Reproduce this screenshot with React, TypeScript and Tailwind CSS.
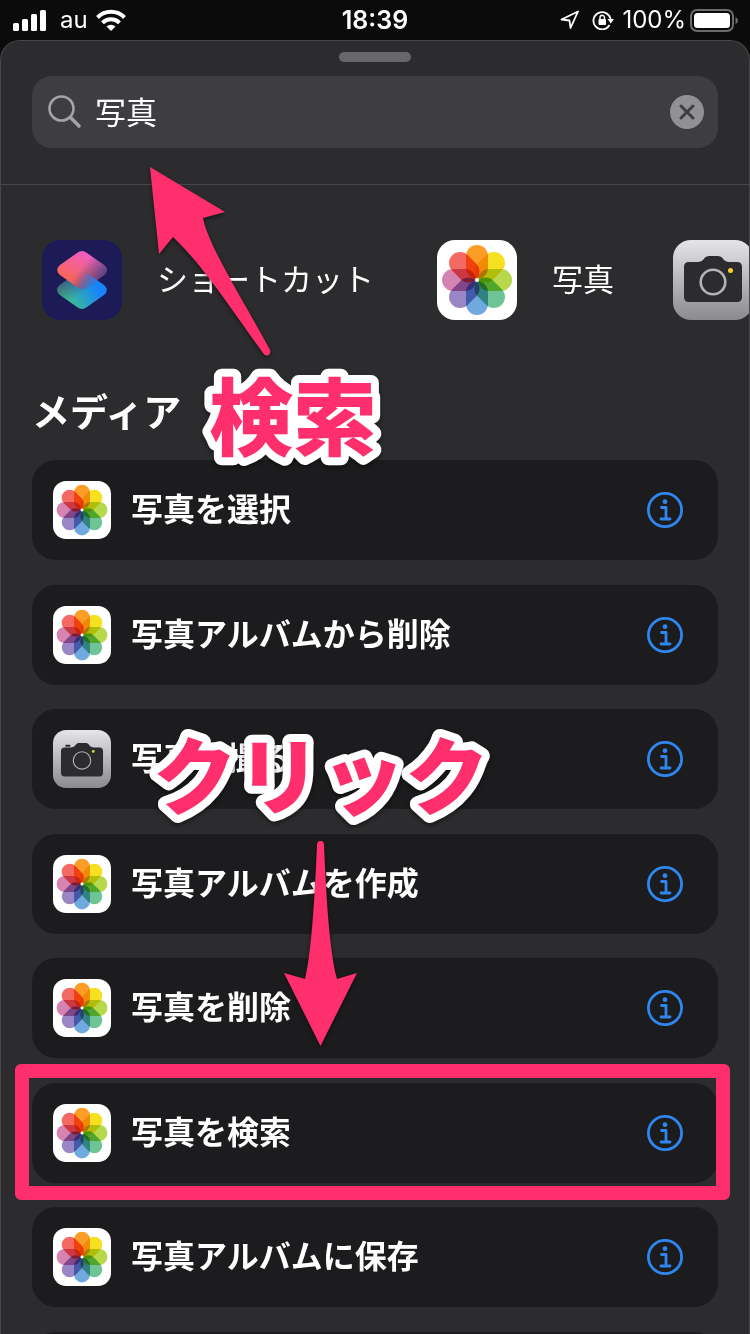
import { useId, useState } from "react";

const petals = [
  { angle: 0, color: "#fb9d27" },
  { angle: 45, color: "#f5e11f" },
  { angle: 90, color: "#b7d84b" },
  { angle: 135, color: "#6fc495" },
  { angle: 180, color: "#6fa9dd" },
  { angle: 225, color: "#9a86c4" },
  { angle: 270, color: "#d584b1" },
  { angle: 315, color: "#f46a62" },
];

function PhotosIcon({ className }: { className: string }) {
  return (
    <svg viewBox="0 0 80 80" className={className} aria-hidden="true">
      <rect width="80" height="80" rx="18" fill="#fff" />
      <g className="isolate">
        {petals.map((p) => (
          <rect
            key={p.angle}
            x="29"
            y="5"
            width="22"
            height="34"
            rx="11"
            fill={p.color}
            transform={`rotate(${p.angle} 40 40)`}
            className="mix-blend-multiply"
          />
        ))}
      </g>
      <circle cx="40" cy="40" r="2" fill="#fff" />
    </svg>
  );
}

function CameraIcon({ className, small = false }: { className: string; small?: boolean }) {
  const id = useId();
  return (
    <svg viewBox="0 0 80 80" className={className} aria-hidden="true">
      <defs>
        <linearGradient id={id} x1="0" y1="0" x2="0" y2="1">
          <stop offset="0" stopColor="#e4e4e9" />
          <stop offset="1" stopColor="#8a8a8f" />
        </linearGradient>
      </defs>
      <rect width="80" height="80" rx="18" fill={`url(#${id})`} />
      <path
        d="M16 22 H25 Q28 22 30 20 L32 17.500 Q33.500 16 36 16 H45 Q47.500 16 49 17.500 L51 20 Q53 22 56 22 H64 Q69 22 69 27 V57 Q69 62 64 62 H16 Q11 62 11 57 V27 Q11 22 16 22 Z"
        fill="#2c2c2e"
        transform={small ? "translate(0 2)" : undefined}
      />
      {small && <rect x="17" y="20.500" width="7" height="2.500" rx="1" fill="#2c2c2e" />}
      <circle cx="40" cy="42" r={small ? 12 : 12.3} fill="none" stroke="#b4b4b8" strokeWidth={small ? 1.500 : 2.600} />
      <circle cx={small ? 55.500 : 57.500} cy={small ? 29.500 : 30.500} r={small ? 2 : 2.500} fill={small ? "#d5dc2c" : "#fbd02d"} />
    </svg>
  );
}

function ShortcutsIcon({ className }: { className: string }) {
  return (
    <svg viewBox="0 0 80 80" className={className} aria-hidden="true">
      <defs>
        <linearGradient id="sc-low" x1="0.2" y1="0.8" x2="0.9" y2="0.5">
          <stop offset="0" stopColor="#3fc08e" />
          <stop offset="0.9" stopColor="#1784fb" />
        </linearGradient>
        <linearGradient id="sc-shade" x1="0" y1="0" x2="0.5" y2="0.6">
          <stop offset="0.2" stopColor="#3f4a78" />
          <stop offset="1" stopColor="#3f4a78" stopOpacity="0" />
        </linearGradient>
        <linearGradient id="sc-top" x1="0.15" y1="0.75" x2="0.6" y2="0.1">
          <stop offset="0" stopColor="#fc6552" />
          <stop offset="1" stopColor="#ee5fbd" />
        </linearGradient>
        <linearGradient id="sc-fade" x1="0.5" y1="0.4" x2="0.95" y2="0.7">
          <stop offset="0" stopColor="#4b3f7c" stopOpacity="0" />
          <stop offset="1" stopColor="#4b3f7c" />
        </linearGradient>
        <linearGradient id="sc-mix" x1="0.4" y1="0.4" x2="1" y2="0.6">
          <stop offset="0" stopColor="#2f86f0" stopOpacity="0" />
          <stop offset="1" stopColor="#2f86f0" />
        </linearGradient>
      </defs>
      <rect width="80" height="80" rx="18" fill="#1c1b58" />
      <path d="M35 33 Q40 29 45 33 L62 45 Q67.500 50 62 55 L45 67 Q40 71 35 67 L18 55 Q12.500 50 18 45 Z" fill="url(#sc-low)" />
      <path d="M35 33 Q40 29 45 33 L62 45 Q67.500 50 62 55 L45 67 Q40 71 35 67 L18 55 Q12.500 50 18 45 Z" fill="url(#sc-shade)" />
      <path d="M35 13 Q40 9 45 13 L62 25 Q67.500 30 62 35 L45 47 Q40 51 35 47 L18 35 Q12.500 30 18 25 Z" fill="url(#sc-top)" />
      <path d="M35 13 Q40 9 45 13 L62 25 Q67.500 30 62 35 L45 47 Q40 51 35 47 L18 35 Q12.500 30 18 25 Z" fill="url(#sc-fade)" />
      <path d="M35 33 Q40 29 45 33 L55 40 L45 47 Q40 51 35 47 L25 40 Z" fill="url(#sc-mix)" />
    </svg>
  );
}

function InfoIcon() {
  return (
    <svg viewBox="0 0 36 36" className="size-9" aria-hidden="true" fill="none" stroke="#2f86ee">
      <circle cx="18" cy="18" r="16.600" strokeWidth="2.800" />
      <circle cx="18" cy="9.700" r="2.400" fill="#2f86ee" stroke="none" />
      <path d="M14.500 15.500 H19 V26.500 M14 27 H23" strokeWidth="2.800" strokeLinecap="round" strokeLinejoin="round" />
    </svg>
  );
}

function StatusBar() {
  return (
    <header className="grid h-10 shrink-0 grid-cols-3 items-center px-3 text-[24px] leading-10 text-white">
      <div className="flex items-center">
        <svg viewBox="0 0 34 22" className="mr-[14px] h-[22px] w-[34px]" fill="#fff" aria-hidden="true">
          <rect x="1" y="14" width="6" height="8" rx="1.500" />
          <rect x="10" y="10" width="6" height="12" rx="1.500" />
          <rect x="19" y="5" width="6" height="17" rx="1.500" />
          <rect x="28" y="1" width="6" height="21" rx="1.500" />
        </svg>
        <span>au</span>
        <svg viewBox="0 0 30 22" className="ml-2 h-[22px] w-[30px]" aria-hidden="true">
          <g fill="none" stroke="#fff" strokeWidth="4">
            <path d="M1.500 8.500 A19 19 0 0 1 28.500 8.500" />
            <path d="M6.500 13.800 A12 12 0 0 1 23.500 13.800" />
          </g>
          <path d="M15 22 L10.500 17.500 A6.500 6.500 0 0 1 19.500 17.500 Z" fill="#fff" />
        </svg>
      </div>
      <span className="text-center text-[25px] font-semibold">18:39</span>
      <div className="flex items-center justify-end">
        <svg viewBox="0 0 20 20" className="mr-3 size-5" aria-hidden="true">
          <path d="M1.500 9.500 L18 1.500 L10.500 18 L9.500 10.500 Z" fill="none" stroke="#fff" strokeWidth="1.800" strokeLinejoin="round" />
        </svg>
        <svg viewBox="0 0 22 20" className="mr-2 h-5 w-[22px]" aria-hidden="true">
          <path d="M17.500 15 A8.600 8.600 0 1 1 18.600 10" fill="none" stroke="#fff" strokeWidth="1.800" />
          <path d="M15.500 9 H22 L18.700 13.500 Z" fill="#fff" />
          <rect x="6.500" y="9" width="7.500" height="6" rx="1" fill="#fff" />
          <path d="M8 9 V7.500 a2.250 2.250 0 0 1 4.500 0 V9" fill="none" stroke="#fff" strokeWidth="1.400" />
        </svg>
        <span>100%</span>
        <svg viewBox="0 0 48 23" className="ml-1 h-[23px] w-12" aria-hidden="true">
          <rect x="1" y="1" width="42" height="21" rx="6" fill="none" stroke="#6c6c6e" strokeWidth="2" />
          <rect x="4" y="4" width="36" height="15" rx="3.500" fill="#fff" />
          <path d="M45.500 8 q2.500 1 2.500 3.500 t-2.500 3.500 Z" fill="#6c6c6e" />
        </svg>
      </div>
    </header>
  );
}

const actions = [
  { label: "写真を選択", app: "photos" },
  { label: "写真アルバムから削除", app: "photos" },
  { label: "写真を撮る", app: "camera" },
  { label: "写真アルバムを作成", app: "photos" },
  { label: "写真を削除", app: "photos" },
  { label: "写真を検索", app: "photos", highlighted: true },
  { label: "写真アルバムに保存", app: "photos" },
];

function Annotations() {
  return (
    <svg
      viewBox="0 0 750 1334"
      className="pointer-events-none absolute top-0 left-0 h-[1334px] w-[750px] drop-shadow-[0_2px_2px_rgba(0,0,0,0.5)]"
    >
      <g fill="#ff2f6d">
        <path d="M150 167 L225 212 L203 218 C207 243 243 300 270 350 Q271 354 268 355.500 Q265 356 263 353 C232 310 202 264 173 237 L159 254 Z" />
        <path d="M317 845 Q317 841 320.500 841 Q324 841 324 845 C326 890 329 950 337 979 L357 973 L320.500 1046 L284 973 L305 979 C312 950 315 890 317 845 Z" />
      </g>
      <g
        fill="#ff2f6d"
        stroke="#fff"
        strokeWidth="16"
        strokeLinejoin="round"
        className="font-black [paint-order:stroke_fill]"
        fontSize="84"
      >
        <text x="209" y="449">検索</text>
        <text x="153" y="808">クリック</text>
      </g>
    </svg>
  );
}

export default function App() {
  const [query, setQuery] = useState("写真");

  return (
    <div className="relative flex h-screen flex-col overflow-hidden bg-[#0b0b0b] font-[Inter,'Noto_Sans_CJK_JP',sans-serif] text-white">
      <StatusBar />
      <main className="flex-1 rounded-t-[20px] border border-b-0 border-[#48484a] bg-[#2c2c2e]">
        <div className="border-b border-[#48484a] px-[31px] pt-[11px] pb-9">
          <div className="mx-auto h-[10px] w-[72px] rounded-full bg-[#66666b]" />
          <form className="mt-[14px] flex h-[72px] items-center rounded-[20px] bg-[#3e3d42] pr-[14px] pl-4" onSubmit={(e) => e.preventDefault()}>
            <svg viewBox="0 0 34 34" className="size-[34px] shrink-0" fill="none" stroke="#a3a3a8" aria-hidden="true">
              <circle cx="13.500" cy="13.500" r="12" strokeWidth="2.600" />
              <path d="M22.500 22.500 L31 31" strokeWidth="3.600" strokeLinecap="round" />
            </svg>
            <input
              type="text"
              aria-label="検索"
              value={query}
              onChange={(e) => setQuery(e.target.value)}
              className="ml-[13px] min-w-0 flex-1 bg-transparent pt-[2px] text-[31px] font-normal text-white outline-none"
            />
            <button type="button" aria-label="消去" onClick={() => setQuery("")} className="shrink-0">
              <svg viewBox="0 0 34 34" className="block size-[34px]" aria-hidden="true">
                <circle cx="17" cy="17" r="17" fill="#909095" />
                <path d="M11 11 L23 23 M23 11 L11 23" stroke="#3e3d42" strokeWidth="3" strokeLinecap="round" />
              </svg>
            </button>
          </form>
        </div>

        <nav className="mt-[55px] flex h-20 items-center overflow-hidden pl-[41px] text-[31px] font-normal whitespace-nowrap">
          <button type="button" className="mr-[63px] flex shrink-0 items-center gap-[35px]">
            <ShortcutsIcon className="size-20" />
            ショートカット
          </button>
          <button type="button" className="mr-[59px] flex shrink-0 items-center gap-[35px]">
            <PhotosIcon className="size-20" />
            写真
          </button>
          <button type="button" aria-label="カメラ" className="shrink-0">
            <CameraIcon className="size-20" />
          </button>
        </nav>

        <section className="px-[31px]">
          <h2 className="mt-16 h-[76px] text-[38px] leading-[56px] font-bold">メディア</h2>
          <ul>
            {actions.map((a) => (
              <li key={a.label} className="relative flex h-[100px] items-center rounded-3xl bg-[#1c1c1e] pr-[35px] pl-[21px] odd:mb-[25px] even:mb-6">
                <button type="button" className="flex flex-1 items-center gap-5 text-left text-[32px] font-bold whitespace-nowrap">
                  {a.app === "camera" ? <CameraIcon small className="size-[58px]" /> : <PhotosIcon className="size-[58px]" />}
                  {a.label}
                </button>
                <button type="button" aria-label={`${a.label}の情報`}>
                  <InfoIcon />
                </button>
                {a.highlighted && (
                  <div className="pointer-events-none absolute -top-[19px] -right-3 -bottom-[17px] -left-[17px] rounded-md border-[14px] border-[#ff2f6d]" />
                )}
              </li>
            ))}
            <li className="h-[100px] rounded-3xl bg-[#1c1c1e]" />
          </ul>
        </section>
      </main>
      <Annotations />
    </div>
  );
}
